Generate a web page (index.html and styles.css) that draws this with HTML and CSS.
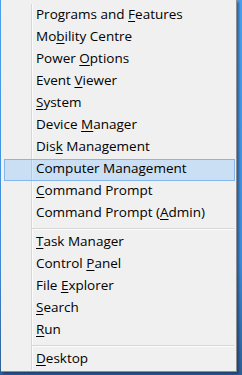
FILE: index.html
```html
<!DOCTYPE html>
<html>
<head>
<meta charset="utf-8">
<link rel="stylesheet" href="styles.css">
</head>
<body>
<div class="menu">
  <div class="item">Programs and <u>F</u>eatures</div>
  <div class="item">Mo<u>b</u>ility Centre</div>
  <div class="item">Power <u>O</u>ptions</div>
  <div class="item">Event <u>V</u>iewer</div>
  <div class="item"><u>S</u>ystem</div>
  <div class="item">Device <u>M</u>anager</div>
  <div class="item">Dis<u>k</u> Management</div>
  <div class="item hot">Computer Management</div>
  <div class="item"><u>C</u>ommand Prompt</div>
  <div class="item">Command Prompt (<u>A</u>dmin)</div>
  <div class="sep"></div>
  <div class="item"><u>T</u>ask Manager</div>
  <div class="item">Control <u>P</u>anel</div>
  <div class="item">File <u>E</u>xplorer</div>
  <div class="item"><u>S</u>earch</div>
  <div class="item"><u>R</u>un</div>
  <div class="sep"></div>
  <div class="item"><u>D</u>esktop</div>
</div>
</body>
</html>
```
FILE: styles.css
```css
html, body {
  margin: 0;
  padding: 0;
  width: 242px;
  height: 375px;
  overflow: hidden;
}
body {
  background: linear-gradient(to bottom, #4aa0ee 0%, #3f8ad8 70%, #2e5f93 100%);
  font-family: "Open Sans", "Noto Sans", sans-serif;
  font-size: 13.5px;
  color: #000;
}
.menu {
  margin-left: 1px;
  width: 235px;
  height: 366px;
  padding-top: 5px;
  background-color: #f0f0f0;
  background-image: linear-gradient(to right, transparent 30px, #d7d7d7 30px, #d7d7d7 31px, #fcfcfc 31px, #fcfcfc 32px, transparent 32px);
  background-size: 100% 366px;
  background-position: 0 4px;
  background-repeat: no-repeat;
  border-right: 1px solid #8e8e8e;
  border-bottom: 1px solid #8e8e8e;
  box-shadow: 2px 2px 2px rgba(10, 30, 70, 0.45);
  display: flex;
  flex-direction: column;
}
.item {
  height: 22px;
  line-height: 18px;
  padding-left: 35px;
  white-space: nowrap;
  box-sizing: border-box;
}
.item u {
  text-decoration-thickness: 1px;
  text-underline-offset: 2px;
}
.hot {
  margin: 0 1px 0 3px;
  padding-left: 31px;
  line-height: 16px;
  border: 1px solid #84b6eb;
  background: rgba(51, 153, 255, 0.2);
}
.sep {
  height: 7px;
  margin: 0 2px 0 31px;
  background: linear-gradient(to bottom, transparent 3px, #d7d7d7 3px, #d7d7d7 4px, #fcfcfc 4px, #fcfcfc 5px, transparent 5px);
}
```
